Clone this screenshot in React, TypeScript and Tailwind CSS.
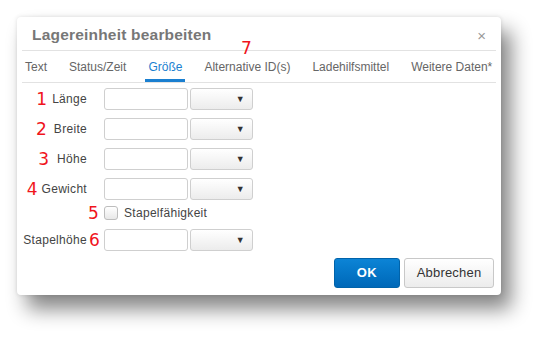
const tabs = ["Text", "Status/Zeit", "Größe", "Alternative ID(s)", "Ladehilfsmittel", "Weitere Daten*"];

const rows = [
  { label: "Länge", num: "1", gap: "gap-[5px]" },
  { label: "Breite", num: "2", gap: "gap-[7px]" },
  { label: "Höhe", num: "3", gap: "gap-[8px]" },
  { label: "Gewicht", num: "4", gap: "gap-[4px]" },
];

function Num({ children, className = "" }: { children: string; className?: string }) {
  return (
    <span className={`font-['DejaVu_Sans',sans-serif] text-[17px] leading-none tracking-normal text-[#f0141c] ${className}`}>
      {children}
    </span>
  );
}

function SizeInputs() {
  return (
    <div className="flex gap-[2px]">
      <div className="h-[22px] w-[84px] rounded-[3px] border border-[#cfcfcf] bg-white" />
      <div className="flex h-[22px] w-[63px] items-center justify-end rounded-[3px] border border-[#cfcfcf] bg-gradient-to-b from-white to-[#ececec] pr-[7px]">
        <span className="text-[9px] leading-none text-[#333]">▼</span>
      </div>
    </div>
  );
}

export default function App() {
  return (
    <div className="h-[343px] w-[549px] bg-white pl-[17px] pt-[17px] font-['Liberation_Sans',Arial,sans-serif]">
      <div className="relative flex h-[278px] w-[484px] flex-col rounded-[4px] bg-white shadow-[10px_14px_20px_rgba(0,0,0,0.48),0_0_4px_rgba(0,0,0,0.12)]">
        {/* header */}
        <div className="mx-[5px] flex h-[34px] items-center justify-between border-b border-[#e2e2e2] px-[10px] pt-[3px]">
          <h1 className="text-[15.5px] font-bold tracking-[0.2px] text-[#777]">Lagereinheit bearbeiten</h1>
          <span className="text-[15px] leading-none text-[#999]">×</span>
        </div>
        <Num className="absolute left-[224px] top-[23px]">7</Num>

        {/* tabs */}
        <div className="mx-[5px] flex h-[32px] gap-[16px] whitespace-nowrap border-b border-[#e2e2e2] text-[12px] text-[#666]">
          {tabs.map((t) => (
            <div
              key={t}
              className={`flex shrink-0 items-center px-[3px] ${t === "Größe" ? "border-b-[3px] border-[#1a7fd0] pt-[3px] text-[#1a7fd0]" : ""}`}
            >
              {t}
            </div>
          ))}
        </div>

        {/* form */}
        <div className="mt-[5px] flex flex-col text-[12px] tracking-[0.3px] text-[#444]">
          {rows.map((r) => (
            <div key={r.label} className="mb-[8px] flex items-center">
              <div className={`flex w-[70px] items-center justify-end ${r.gap}`}>
                <Num>{r.num}</Num>
                <span>{r.label}</span>
              </div>
              <div className="w-[17px]" />
              <SizeInputs />
            </div>
          ))}
          <div className="-mt-[3px] mb-[8px] flex h-[16px] items-center">
            <div className="w-[71px]" />
            <Num className="w-[16px]">5</Num>
            <div className="h-[14px] w-[14px] rounded-[3px] border border-[#bdbdbd] bg-gradient-to-b from-white to-[#e8e8e8]" />
            <span className="ml-[6px]">Stapelfähigkeit</span>
          </div>
          <div className="flex items-center">
            <div className="flex w-[70px] justify-end">
              <span>Stapelhöhe</span>
            </div>
            <Num className="w-[17px] pl-[2px]">6</Num>
            <SizeInputs />
          </div>
        </div>

        {/* buttons */}
        <div className="mt-auto flex justify-end gap-[4px] pb-[7px] pr-[7px]">
          <button className="h-[30px] w-[66px] rounded-[3px] border border-[#0063aa] bg-gradient-to-b from-[#0c84d6] to-[#0068b8] text-[13px] font-bold tracking-[0.5px] text-white">
            OK
          </button>
          <button className="h-[30px] w-[90px] rounded-[3px] border border-[#c8c8c8] bg-gradient-to-b from-white to-[#ececec] text-[13px] tracking-[0.2px] text-[#333]">
            Abbrechen
          </button>
        </div>
      </div>
    </div>
  );
}
